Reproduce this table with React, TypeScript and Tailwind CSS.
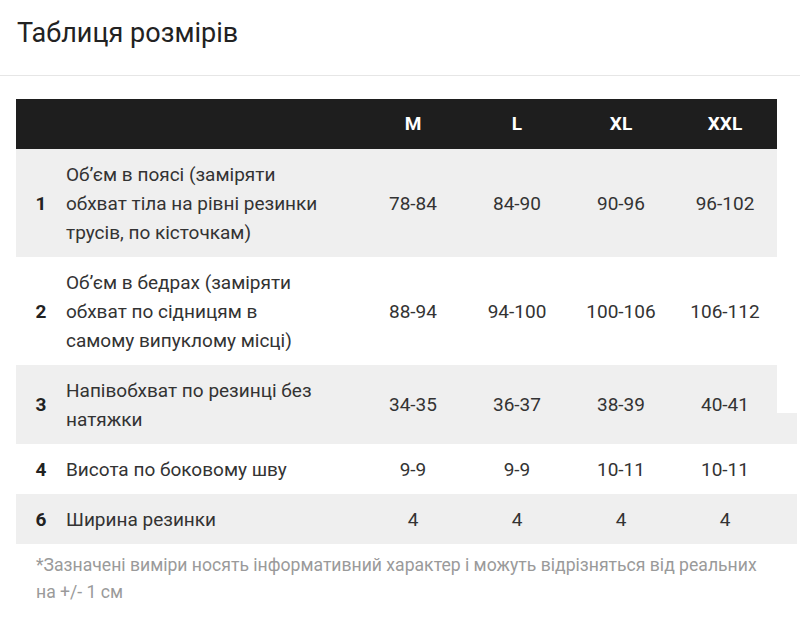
import React from 'react';

type Row = {
    num: string;
    label: string;
    values: string[];
    shaded: boolean;
};

const sizes: string[] = ['M', 'L', 'XL', 'XXL'];

const rows: Row[] = [
    { num: '1', label: 'Об\u02BCєм в поясі (заміряти обхват тіла на рівні резинки трусів, по кісточкам)', values: ['78-84', '84-90', '90-96', '96-102'], shaded: true },
    { num: '2', label: 'Об\u02BCєм в бедрах (заміряти обхват по сідницям в самому випуклому місці)', values: ['88-94', '94-100', '100-106', '106-112'], shaded: false },
    { num: '3', label: 'Напівобхват по резинці без натяжки', values: ['34-35', '36-37', '38-39', '40-41'], shaded: true },
    { num: '4', label: 'Висота по боковому шву', values: ['9-9', '9-9', '10-11', '10-11'], shaded: false },
    { num: '6', label: 'Ширина резинки', values: ['4', '4', '4', '4'], shaded: true },
];

const App: React.FC = () => {
    return (
        <div className="w-[800px] h-[630px] bg-white overflow-hidden font-['Roboto',_'Liberation_Sans',_sans-serif]">
            <div className="h-[76px] border-b border-[#e6e6e6] flex items-center pl-[17px] pb-[9px]">
                <h2 className="text-[27px] text-[#222] leading-none">Таблиця розмірів</h2>
            </div>

            <div className="mt-[23px] ml-4 w-[761px]">
                <div className="grid grid-cols-[50px_295px_repeat(4,104px)] h-[50px] bg-[#1e1e1e] text-white font-bold text-[19px] items-center">
                    <div />
                    <div />
                    {sizes.map((s) => (
                        <div key={s} className="text-center">{s}</div>
                    ))}
                </div>

                {rows.map((row) => (
                    <div
                        key={row.num}
                        className={`relative grid grid-cols-[50px_295px_repeat(4,104px)] items-center py-[10.5px] min-h-[50px] text-[19px] leading-[29px] text-[#333] ${row.shaded ? 'bg-[#efefef]' : 'bg-white'}`}
                    >
                        <div className="text-center font-bold text-[#222]">{row.num}</div>
                        <div className="pr-[36px]">{row.label}</div>
                        {row.values.map((v, i) => (
                            <div key={i} className="text-center">{v}</div>
                        ))}
                        {row.num === '3' && (
                            <div className="absolute right-[-20px] bottom-0 w-[20px] h-[31px] bg-[#efefef]" />
                        )}
                        {row.num === '6' && (
                            <div className="absolute right-[-20px] top-0 bottom-0 w-[20px] bg-[#efefef]" />
                        )}
                    </div>
                ))}
            </div>

            <p className="mt-[8px] ml-9 w-[740px] text-[17.6px] leading-[27px] text-[#9a9a9a]">
                *Зазначені виміри носять інформативний характер і можуть відрізняться від реальних на +/- 1 см
            </p>
        </div>
    );
};

export default App;
